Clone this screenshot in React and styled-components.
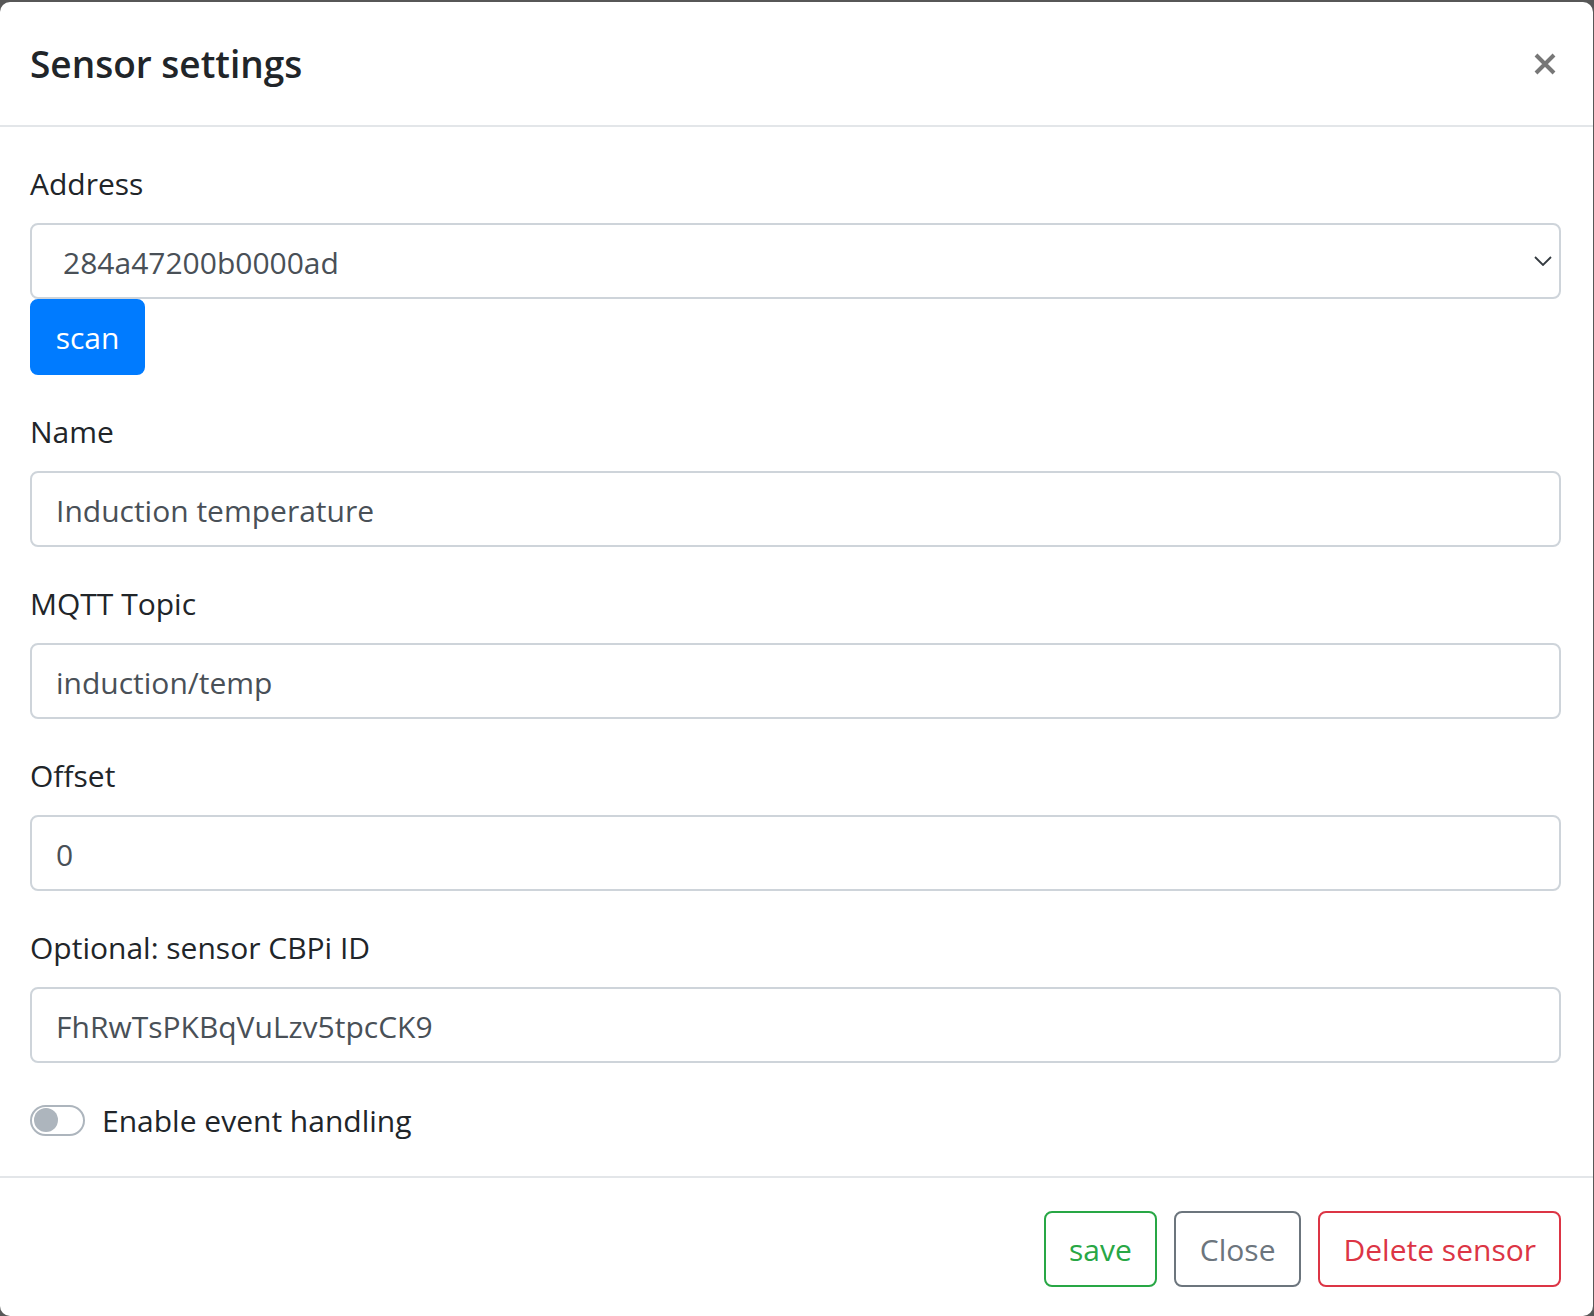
import styled, { createGlobalStyle } from 'styled-components';

const GlobalStyle = createGlobalStyle`
  html, body {
    margin: 0;
    height: 100%;
  }
  body {
    background: #575757;
    font-family: "Open Sans", "Noto Sans", sans-serif;
    color: #212529;
    overflow: hidden;
  }
  #root {
    height: 100%;
  }
  * {
    box-sizing: border-box;
  }
`;

const Modal = styled.div`
  margin: 2px 1px 0 0;
  height: calc(100% - 2px);
  background: #fff;
  border-radius: 10px;
  display: flex;
  flex-direction: column;
`;

const Header = styled.div`
  height: 125px;
  padding: 0 37px 0 30px;
  display: flex;
  align-items: center;
  justify-content: space-between;
  border-bottom: 2px solid #e3e6e9;
`;

const Title = styled.h5`
  margin: 0;
  font-size: 37px;
  font-weight: 600;
  line-height: 60px;
  color: #212529;
`;

const CloseX = styled.button`
  border: 0;
  background: none;
  padding: 0;
  display: flex;
  cursor: pointer;
`;

const Body = styled.div`
  padding: 33px 32px 32px 30px;
`;

const Group = styled.div`
  margin-bottom: ${(p) => (p.$last ? '0' : '33px')};
`;

const Label = styled.label`
  display: block;
  font-size: 30px;
  line-height: 48px;
  margin-bottom: 15px;
`;

const Input = styled.input`
  display: block;
  width: 100%;
  height: 76px;
  padding: 3px 24px 0;
  font-family: inherit;
  font-size: 30px;
  color: #495057;
  background: #fff;
  border: 2px solid #ced4da;
  border-radius: 8px;
  outline: none;
`;

const SelectWrap = styled.div`
  position: relative;
`;

const Select = styled.select`
  display: block;
  width: 100%;
  height: 76px;
  padding: 3px 60px 0 31px;
  font-family: inherit;
  font-size: 30px;
  color: #495057;
  background: #fff;
  border: 2px solid #ced4da;
  border-radius: 8px;
  appearance: none;
  outline: none;
`;

const Chevron = styled.svg`
  position: absolute;
  right: 9px;
  top: 33px;
  pointer-events: none;
`;

const Button = styled.button`
  height: 76px;
  padding: 2px ${(p) => p.$px || 24}px 0;
  font-family: inherit;
  font-size: 30px;
  line-height: 1;
  border-radius: 8px;
  border: 2px solid ${(p) => p.$color};
  background: ${(p) => (p.$solid ? p.$color : '#fff')};
  color: ${(p) => (p.$solid ? '#fff' : p.$color)};
  cursor: pointer;
`;

const ScanButton = styled(Button)`
  display: block;
  width: 115px;
  padding: 2px 0 0;
`;

const SwitchRow = styled.div`
  display: flex;
  align-items: center;
  height: 48px;
  gap: 17px;
  font-size: 30px;
`;

const Track = styled.span`
  width: 55px;
  height: 31px;
  border: 2px solid #adb5bd;
  border-radius: 16px;
  display: flex;
  align-items: center;
  padding-left: 2px;
`;

const Knob = styled.span`
  width: 24px;
  height: 24px;
  border-radius: 50%;
  background: #adb5bd;
`;

const Footer = styled.div`
  flex: 1;
  border-top: 2px solid #e3e6e9;
  padding: 33px 32px 0 30px;
  display: flex;
  justify-content: flex-end;
  align-items: flex-start;
  gap: 17px;
`;

const fields = [
  { label: 'Name', value: 'Induction temperature' },
  { label: 'MQTT Topic', value: 'induction/temp' },
  { label: 'Offset', value: '0' },
  { label: 'Optional: sensor CBPi ID', value: 'FhRwTsPKBqVuLzv5tpcCK9' },
];

export default function App() {
  return (
    <>
      <GlobalStyle />
      <Modal>
        <Header>
          <Title>Sensor settings</Title>
          <CloseX aria-label="Close">
            <svg width="22" height="22" viewBox="0 0 22 22">
              <path d="M2 2 L20 20 M20 2 L2 20" stroke="#777" strokeWidth="4" />
            </svg>
          </CloseX>
        </Header>
        <Body>
          <Group>
            <Label>Address</Label>
            <SelectWrap>
              <Select defaultValue="284a47200b0000ad">
                <option>284a47200b0000ad</option>
              </Select>
              <Chevron width="18" height="10" viewBox="0 0 18 10">
                <path d="M1 1 L9 9 L17 1" fill="none" stroke="#343a40" strokeWidth="1.8" />
              </Chevron>
            </SelectWrap>
            <ScanButton $color="#007bff" $solid>scan</ScanButton>
          </Group>
          {fields.map((f) => (
            <Group key={f.label}>
              <Label>{f.label}</Label>
              <Input defaultValue={f.value} />
            </Group>
          ))}
          <Group $last>
            <SwitchRow>
              <Track>
                <Knob />
              </Track>
              <span>Enable event handling</span>
            </SwitchRow>
          </Group>
        </Body>
        <Footer>
          <Button $color="#28a745" $px={23}>save</Button>
          <Button $color="#6c757d" $px={24}>Close</Button>
          <Button $color="#dc3545" $px={23}>Delete sensor</Button>
        </Footer>
      </Modal>
    </>
  );
}
